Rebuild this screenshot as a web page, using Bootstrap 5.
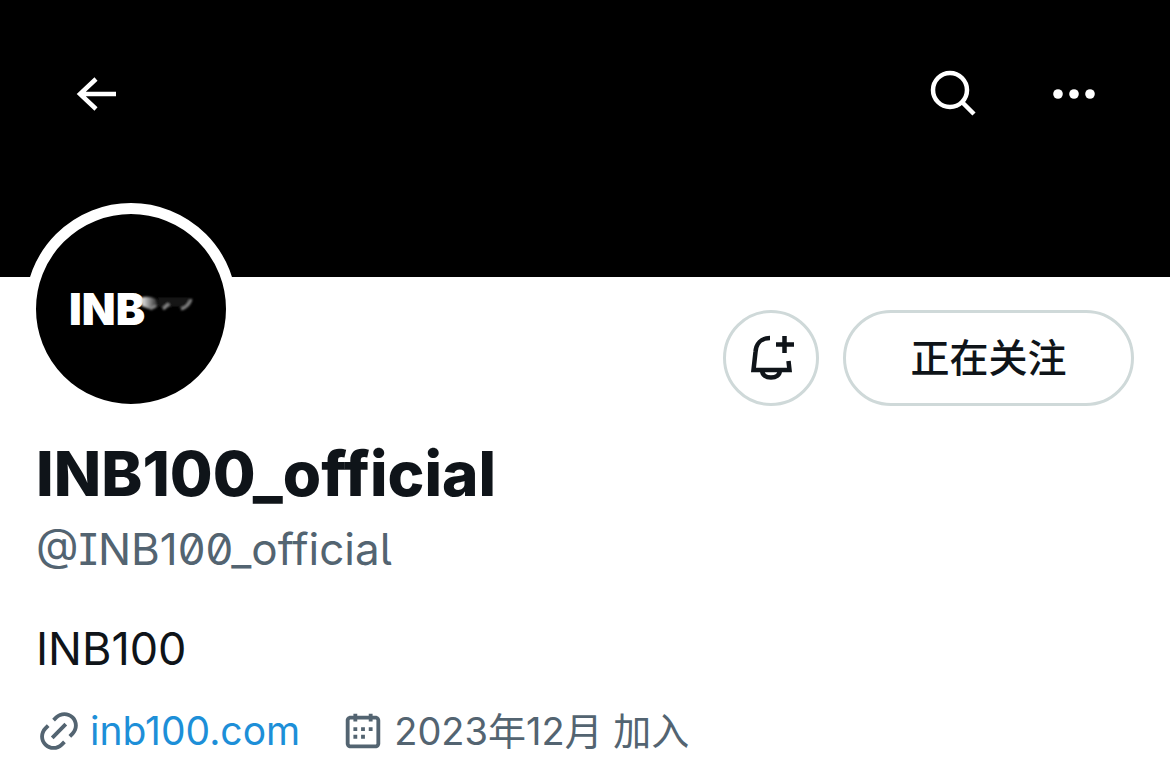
<!DOCTYPE html>
<html lang="zh-CN">
<head>
<meta charset="utf-8">
<meta name="viewport" content="width=device-width, initial-scale=1">
<title>INB100_official</title>
<link href="https://cdn.jsdelivr.net/npm/bootstrap@5.3.0/dist/css/bootstrap.min.css" rel="stylesheet">
<style>
  body { font-family: Inter, "Noto Sans CJK SC", sans-serif; color: #0f1419; background: #fff; }
  .banner { height: 277px; padding: 64px 66px 0 60px; }
  .banner-btn { width: 60px; height: 60px; }
  .banner-actions { gap: 62px; }
  .profile { padding: 0 36px; }
  .avatar { width: 212px; height: 212px; margin: -74px 0 0 -11px; border: 11px solid #fff; background: #000; }
  .avatar-word { font-size: 44px; line-height: 44px; font-weight: 900; }
  .actions { padding-top: 33px; gap: 24px; }
  .outline { border: 3px solid #cfd9d9; color: #0f1419; height: 96px; }
  .outline-round { width: 96px; }
  .outline-wide { width: 291px; font-size: 39px; font-weight: 500; line-height: 48px; }
  .display-name { font-size: 62px; line-height: 72px; font-weight: 800; margin-top: 23px; }
  .handle { font-size: 44px; line-height: 56px; color: #536471; margin-top: 11px; font-feature-settings: "ss02"; }
  .bio { font-size: 45px; line-height: 56px; margin-top: 44px; }
  .meta { font-size: 38px; line-height: 48px; color: #536471; margin-top: 30px; column-gap: 40px; }
  .meta a { font-size: 39px; color: #1d8fd8; }
  .meta-icon { width: 46px; height: 46px; }
</style>
</head>
<body>
<header class="banner bg-black text-white d-flex justify-content-between align-items-start">
  <button type="button" class="banner-btn btn p-0 border-0 text-white" aria-label="返回">
    <svg class="d-block" width="60" height="60" viewBox="0 0 60 60" fill="none" stroke="currentColor" stroke-width="4.500"><path d="M56 30H20M36 15L20 30l16 15"/></svg>
  </button>
  <div class="banner-actions d-flex">
    <button type="button" class="banner-btn btn p-0 border-0 text-white" aria-label="搜索">
      <svg class="d-block" width="60" height="60" viewBox="0 0 60 60" fill="none" stroke="currentColor" stroke-width="4.5"><circle cx="28" cy="26" r="17"/><path d="M40 38l12 12"/></svg>
    </button>
    <button type="button" class="banner-btn btn p-0 border-0 text-white" aria-label="更多">
      <svg class="d-block" width="60" height="60" viewBox="0 0 60 60" fill="currentColor"><circle cx="14" cy="30" r="4.8"/><circle cx="30" cy="30" r="4.8"/><circle cx="46" cy="30" r="4.8"/></svg>
    </button>
  </div>
</header>
<main class="profile">
  <div class="d-flex justify-content-between align-items-start">
    <div class="avatar rounded-circle d-flex align-items-center justify-content-center text-white flex-shrink-0">
      <span class="avatar-word">INB</span>
      <svg width="48" height="40" viewBox="0 0 48 40" overflow="visible" aria-hidden="true">
        <defs>
          <filter id="soft" x="-50%" y="-50%" width="200%" height="200%"><feGaussianBlur stdDeviation="1.3"/></filter>
          <linearGradient id="fade"><stop offset="0" stop-color="#eee"/><stop offset="1" stop-color="#222"/></linearGradient>
        </defs>
        <g filter="url(#soft)"><path d="M-4 9Q2 6 11 10L13 17L4 20L-3 17Z" fill="url(#fade)"/><path d="M13 13h30" stroke="#181818" stroke-width="9"/><path d="M5 20l6-3M18 20l6-5M36 20q8-2 10-10" fill="none" stroke="#888" stroke-width="3"/></g>
      </svg>
    </div>
    <div class="actions d-flex">
      <button type="button" class="outline outline-round btn rounded-circle p-0 d-flex align-items-center justify-content-center" aria-label="通知">
        <svg width="56" height="56" viewBox="0 0 56 56" fill="none" stroke="currentColor" stroke-width="4.500"><path d="M27 8C18 8 13 14 12.500 22L10.500 40H46.500L45.500 31M19 40C19 45 23 47.500 28 47.500S37 45 37 40M41.500 6v17M33 14.500h18"/></svg>
      </button>
      <button type="button" class="outline outline-wide btn rounded-pill p-0">正在关注</button>
    </div>
  </div>
  <h1 class="display-name mb-0">INB100_official</h1>
  <p class="handle mb-0">@INB100_official</p>
  <p class="bio mb-0">INB100</p>
  <div class="meta d-flex flex-wrap">
    <div class="d-flex align-items-center gap-2">
      <svg class="meta-icon" viewBox="0 0 24 24" fill="currentColor" aria-hidden="true"><path d="M18.360 5.640c-1.950-1.960-5.110-1.960-7.070 0L9.880 7.050 8.460 5.640l1.420-1.420c2.730-2.730 7.160-2.730 9.900 0 2.730 2.740 2.730 7.170 0 9.900l-1.420 1.420-1.410-1.420 1.410-1.410c1.960-1.960 1.960-5.120 0-7.070zm-2.120 3.530l-7.070 7.070-1.410-1.410 7.070-7.070 1.410 1.410zm-12.020.71l1.420-1.420 1.410 1.420-1.410 1.410c-1.960 1.960-1.960 5.120 0 7.070 1.950 1.960 5.110 1.960 7.070 0l1.410-1.410 1.420 1.410-1.420 1.420c-2.730 2.730-7.160 2.730-9.900 0-2.730-2.740-2.730-7.170 0-9.900z"/></svg>
      <a href="#" class="text-decoration-none">inb100.com</a>
    </div>
    <div class="d-flex align-items-center gap-2">
      <svg class="meta-icon" viewBox="0 0 24 24" fill="currentColor" aria-hidden="true"><path d="M7 4V3h2v1h6V3h2v1h1.500C19.890 4 21 5.120 21 6.500v12c0 1.380-1.110 2.500-2.500 2.500h-13C4.120 21 3 19.880 3 18.500v-12C3 5.120 4.120 4 5.500 4H7zm0 2H5.500c-.27 0-.5.220-.5.500v12c0 .280.230.500.500.500h13c.280 0 .500-.220.500-.500v-12c0-.280-.220-.500-.500-.500H17v1h-2V6H9v1H7V6zm0 6h2v-2H7v2zm0 4h2v-2H7v2zm4-4h2v-2h-2v2zm0 4h2v-2h-2v2zm4-4h2v-2h-2v2z"/></svg>
      <span>2023年12月 加入</span>
    </div>
  </div>
</main>
<script src="https://cdn.jsdelivr.net/npm/bootstrap@5.3.0/dist/js/bootstrap.bundle.min.js"></script>
</body>
</html>
